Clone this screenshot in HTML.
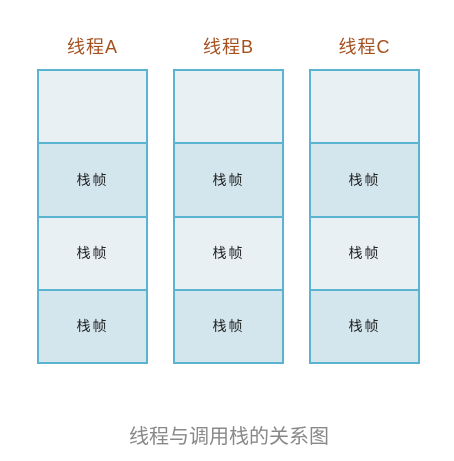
<!DOCTYPE html>
<html><head><meta charset="utf-8"><style>
body{margin:0;width:454px;height:461px;background:#fff;position:relative;overflow:hidden;font-family:"Liberation Sans","Noto Sans CJK SC",sans-serif}
.t{position:absolute;top:36px;width:111px;text-align:center;font-size:18px;color:#a4501f;letter-spacing:1px;line-height:22px}
.col{position:absolute;top:69px;width:111px;height:295px;box-sizing:border-box;border:2px solid #5ab3cf;display:flex;flex-direction:column}
.c{flex:1;box-sizing:border-box;display:flex;align-items:center;justify-content:center;font-size:14px;color:#222;letter-spacing:2px}
.c+.c{border-top:2px solid #5ab3cf}
.l{background:#e8f0f4}.d{background:#d3e5ed}
.cap{position:absolute;top:420px;left:0;width:458px;text-align:center;font-size:20px;color:#888}
</style></head><body>
<div class="t" style="left:37px">线程A</div>
<div class="t" style="left:173px">线程B</div>
<div class="t" style="left:309px">线程C</div>
<div class="col" style="left:37px"><div class="c l"></div><div class="c d">栈帧</div><div class="c l">栈帧</div><div class="c d">栈帧</div></div>
<div class="col" style="left:173px"><div class="c l"></div><div class="c d">栈帧</div><div class="c l">栈帧</div><div class="c d">栈帧</div></div>
<div class="col" style="left:309px"><div class="c l"></div><div class="c d">栈帧</div><div class="c l">栈帧</div><div class="c d">栈帧</div></div>
<div class="cap">线程与调用栈的关系图</div>
</body></html>
